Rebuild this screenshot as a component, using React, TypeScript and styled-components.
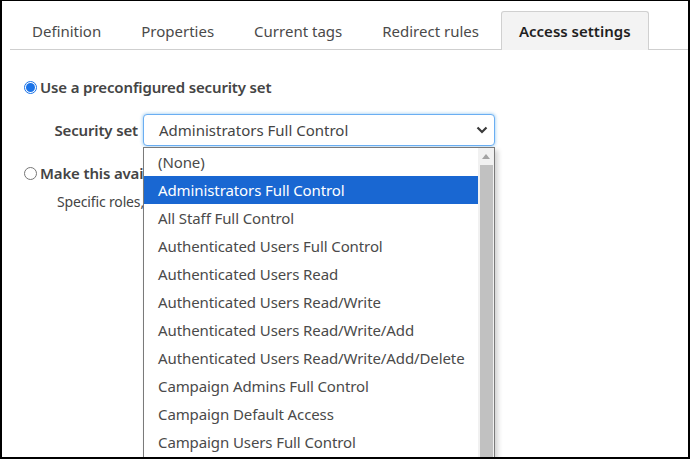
import React from "react";
import styled, { createGlobalStyle } from "styled-components";

const GlobalStyle = createGlobalStyle`
  html, body { margin: 0; padding: 0; background: #fff; }
  body { font-family: "Noto Sans", "Open Sans", Arial, sans-serif; }
  * { box-sizing: border-box; }
`;

const Frame = styled.div`
  width: 690px;
  height: 459px;
  border-style: solid;
  border-color: #000;
  border-width: 1px 2px 2px 2px;
  overflow: hidden;
  position: relative;
  background: #fff;
  padding: 10px 0 0 8px;
  color: #444;
`;

const TabBar = styled.div`
  display: flex;
  gap: 4px;
  padding-left: 4px;
  border-bottom: 1px solid #cfcfcf;
  height: 39px;
`;

const Tab = styled.div<{ $active?: boolean }>`
  height: 39px;
  padding: 0 17px;
  display: flex;
  align-items: center;
  font-size: 15px;
  color: ${(p) => (p.$active ? "#1f1f1f" : "#4a4a4a")};
  font-weight: ${(p) => (p.$active ? 600 : 400)};
  background: ${(p) => (p.$active ? "#f3f3f3" : "transparent")};
  border: 1px solid ${(p) => (p.$active ? "#d0d0d0" : "transparent")};
  border-bottom: none;
  border-radius: 3px 3px 0 0;
  margin-bottom: -1px;
`;

const Body = styled.div`
  padding: 21px 0 0 14px;
  display: flex;
  flex-direction: column;
`;

const OptionRow = styled.label<{ $gapAbove?: number }>`
  display: flex;
  align-items: center;
  gap: 3px;
  font-size: 15px;
  font-weight: 600;
  letter-spacing: -0.15px;
  color: #444;
  height: 32px;
  margin-top: ${(p) => p.$gapAbove ?? 0}px;
`;

const Radio = styled.span<{ $checked?: boolean }>`
  width: 13px;
  height: 13px;
  border-radius: 50%;
  border: 1px solid ${(p) => (p.$checked ? "#1a73e8" : "#767676")};
  display: inline-flex;
  align-items: center;
  justify-content: center;
  background: #fff;
  &::after {
    content: "";
    width: 9px;
    height: 9px;
    border-radius: 50%;
    background: ${(p) => (p.$checked ? "#1a73e8" : "transparent")};
  }
`;

const FieldRow = styled.div`
  display: flex;
  align-items: center;
  height: 32px;
  margin-top: 11px;
  position: relative;
`;

const FieldLabel = styled.span`
  width: 119px;
  padding-right: 5px;
  text-align: right;
  font-size: 15px;
  font-weight: 600;
  letter-spacing: -0.15px;
  color: #444;
`;

const SelectBox = styled.div`
  width: 352px;
  height: 32px;
  border: 1px solid #6aaef2;
  border-radius: 4px;
  box-shadow: 0 0 3px 1px rgba(102, 175, 233, 0.45);
  display: flex;
  align-items: center;
  justify-content: space-between;
  padding: 0 6px 0 15px;
  font-size: 15px;
  color: #444;
  background: #fff;
`;

const DropList = styled.div`
  position: absolute;
  left: 119px;
  top: 33px;
  width: 352px;
  height: 330px;
  background: #fff;
  border: 1px solid #7a7a7a;
  border-bottom: none;
  box-shadow: 3px 3px 5px rgba(0, 0, 0, 0.18);
  display: flex;
  z-index: 5;
`;

const Items = styled.div`
  flex: 1;
  display: flex;
  flex-direction: column;
`;

const Item = styled.div<{ $selected?: boolean }>`
  height: 28px;
  flex: none;
  display: flex;
  align-items: center;
  padding-left: 14px;
  font-size: 15px;
  letter-spacing: -0.1px;
  color: ${(p) => (p.$selected ? "#fff" : "#4a4a4a")};
  background: ${(p) => (p.$selected ? "#1967d2" : "transparent")};
`;

const ScrollTrack = styled.div`
  width: 16px;
  background: #f1f1f1;
  display: flex;
  flex-direction: column;
  align-items: center;
  padding-top: 6px;
`;

const ScrollThumb = styled.div`
  width: 13px;
  flex: 1;
  margin-top: 6px;
  background: #c1c1c1;
`;

const Hint = styled.div`
  font-size: 14px;
  letter-spacing: -0.15px;
  color: #444;
  padding-left: 33px;
  height: 24px;
  display: flex;
  align-items: center;
`;

const options = [
  "(None)",
  "Administrators Full Control",
  "All Staff Full Control",
  "Authenticated Users Full Control",
  "Authenticated Users Read",
  "Authenticated Users Read/Write",
  "Authenticated Users Read/Write/Add",
  "Authenticated Users Read/Write/Add/Delete",
  "Campaign Admins Full Control",
  "Campaign Default Access",
  "Campaign Users Full Control",
  "Campaign Users Read",
];

const tabs = ["Definition", "Properties", "Current tags", "Redirect rules", "Access settings"];

export default function App() {
  return (
    <>
      <GlobalStyle />
      <Frame>
        <TabBar>
          {tabs.map((t) => (
            <Tab key={t} $active={t === "Access settings"}>
              {t}
            </Tab>
          ))}
        </TabBar>
        <Body>
          <OptionRow>
            <Radio $checked />
            Use a preconfigured security set
          </OptionRow>
          <FieldRow>
            <FieldLabel>Security set</FieldLabel>
            <SelectBox>
              <span>Administrators Full Control</span>
              <svg width="12" height="8" viewBox="0 0 12 8">
                <path d="M1.5 1.5 L6 6 L10.5 1.5" fill="none" stroke="#3a3a3a" strokeWidth="2.2" />
              </svg>
            </SelectBox>
            <DropList>
              <Items>
                {options.map((o) => (
                  <Item key={o} $selected={o === "Administrators Full Control"}>
                    {o}
                  </Item>
                ))}
              </Items>
              <ScrollTrack>
                <svg width="8" height="5" viewBox="0 0 8 5">
                  <path d="M0 5 L4 0 L8 5 Z" fill="#a3a3a3" />
                </svg>
                <ScrollThumb />
              </ScrollTrack>
            </DropList>
          </FieldRow>
          <OptionRow $gapAbove={11}>
            <Radio />
            Make this available to specific roles and users
          </OptionRow>
          <Hint>Specific roles, users and groups can be given access</Hint>
        </Body>
      </Frame>
    </>
  );
}
